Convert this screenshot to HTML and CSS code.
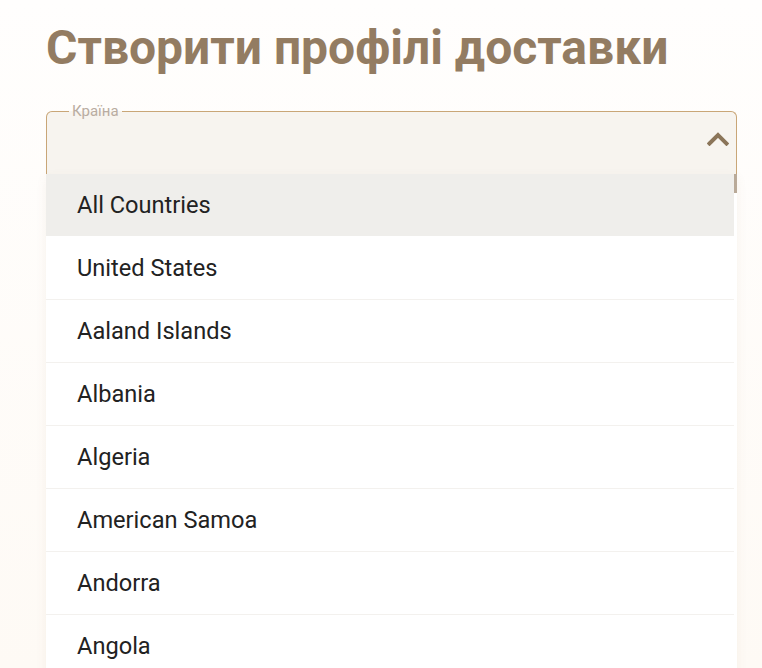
FILE: index.html
```html
<!DOCTYPE html>
<html lang="uk">
<head>
<meta charset="utf-8">
<title>Створити профілі доставки</title>
<link rel="stylesheet" href="styles.css">
</head>
<body>
<main class="page">
  <h1 class="title">Створити профілі доставки</h1>
  <fieldset class="select">
    <legend class="select-label">Країна</legend>
    <svg class="chevron" width="22" height="14" viewBox="0 0 22 14" aria-hidden="true">
      <path d="M2.5 11.5 L11 3 L19.5 11.5" fill="none" stroke="#8b7559" stroke-width="4" stroke-linecap="square" stroke-linejoin="miter"/>
    </svg>
  </fieldset>
  <div class="list">
    <ul class="options">
      <li class="option active">All Countries</li>
      <li class="option">United States</li>
      <li class="option">Aaland Islands</li>
      <li class="option">Albania</li>
      <li class="option">Algeria</li>
      <li class="option">American Samoa</li>
      <li class="option">Andorra</li>
      <li class="option">Angola</li>
    </ul>
    <div class="scrollbar"><div class="thumb"></div></div>
  </div>
</main>
</body>
</html>
```

FILE: styles.css
```css
* { box-sizing: border-box; }
html, body { height: 100%; }
body {
  margin: 0;
  overflow: hidden;
  background: linear-gradient(180deg, #fffefd 0%, #fefaf5 100%);
  font-family: Roboto, "Noto Sans", "Liberation Sans", sans-serif;
}
.page {
  padding: 0 25px 0 46px;
}
.title {
  margin: 0;
  padding-top: 19px;
  font-size: 48px;
  line-height: 58px;
  font-weight: 700;
  color: #937c62;
  letter-spacing: 0;
}
.select {
  position: relative;
  margin: 27px 0 0 0;
  padding: 0;
  height: 77px;
  border: 1px solid #c9a677;
  border-bottom: none;
  border-radius: 6px 6px 0 0;
  background: #f7f4ef;
  min-width: 0;
}
.select-label {
  margin-left: 22px;
  padding: 0 3px;
  font-size: 15px;
  line-height: 14px;
  color: #b9aca1;
}
.chevron {
  position: absolute;
  right: 7px;
  top: 14px;
}
.list {
  display: flex;
  margin-top: -7px;
  width: 691px;
  background: #ffffff;
  box-shadow: 0 4px 10px rgba(150, 120, 80, 0.08);
  position: relative;
}
.options {
  list-style: none;
  margin: 0;
  padding: 0;
  flex: 1;
}
.option {
  height: 63px;
  padding-left: 31px;
  display: flex;
  align-items: center;
  font-size: 23.6px;
  color: #222222;
  border-bottom: 1px solid #f3f1ee;
}
.option.active {
  background: #efeeeb;
  border-bottom-color: #ffffff;
}
.scrollbar {
  width: 3px;
}
.thumb {
  height: 19px;
  background: #b9aa99;
}
```
